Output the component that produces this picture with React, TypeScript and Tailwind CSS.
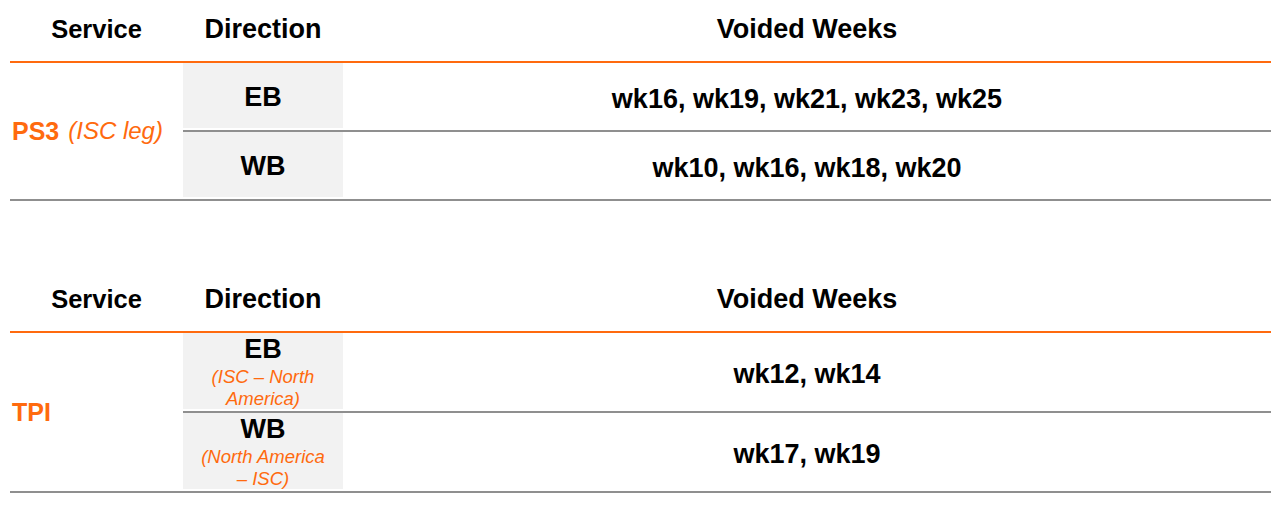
import React from "react";

const ORANGE = "text-[#ff6a0e]";

type Row = { dir: string; sub?: string[]; weeks: string };

function Table({
  service,
  note,
  rows,
  rowH,
  lastH,
}: {
  service: string;
  note?: string;
  rows: Row[];
  rowH: string;
  lastH: string;
}) {
  return (
    <div className="ml-[10px] w-[1261px]">
      <div className="flex h-[61px] items-center text-[27px] font-bold text-black leading-[30px] pb-[4px]">
        <div className="w-[173px] text-center text-[25.5px]">Service</div>
        <div className="w-[160px] text-center">Direction</div>
        <div className="flex-1 text-center">Voided Weeks</div>
      </div>
      <div className="h-[2px] bg-[#ff6a0e]" />
      <div className="flex border-b-2 border-[#8f8f8f]">
        <div className={`w-[173px] pl-[2px] flex items-center ${ORANGE} whitespace-nowrap`}>
          <span className="text-[25px] font-bold leading-[30px]">{service}</span>
          {note && <span className="ml-[9px] text-[24px] italic leading-[30px]">{note}</span>}
        </div>
        <div className="flex-1 flex flex-col">
          {rows.map((r, i) => {
            const last = i === rows.length - 1;
            return (
              <div
                key={i}
                className={`flex ${last ? lastH : rowH} ${last ? "" : "border-b-2 border-[#8f8f8f]"}`}
              >
                <div className="w-[160px] bg-[#f2f2f2] mb-[2px] flex flex-col items-center justify-center text-center pt-[2px]">
                  <div className="text-[27px] font-bold leading-[30px] text-black">{r.dir}</div>
                  {r.sub && (
                    <div className={`text-[18.5px] italic leading-[22px] mt-[2px] ${ORANGE} px-[6px]`}>
                      {r.sub.map((s, j) => (
                        <div key={j}>{s}</div>
                      ))}
                    </div>
                  )}
                </div>
                <div className="flex-1 flex items-center justify-center text-[27px] font-bold leading-[30px] text-black pt-[4px]">
                  {r.weeks}
                </div>
              </div>
            );
          })}
        </div>
      </div>
    </div>
  );
}

export default function App() {
  return (
    <div
      className="w-[1280px] h-[513px] bg-white overflow-hidden"
      style={{ fontFamily: '"Liberation Sans", Arial, sans-serif' }}
    >
      <Table
        service="PS3"
        note="(ISC leg)"
        rowH="h-[69px]"
        lastH="h-[67px]"
        rows={[
          { dir: "EB", weeks: "wk16, wk19, wk21, wk23, wk25" },
          { dir: "WB", weeks: "wk10, wk16, wk18, wk20" },
        ]}
      />
      <div className="h-[69px]" />
      <Table
        service="TPI"
        rowH="h-[80px]"
        lastH="h-[78px]"
        rows={[
          { dir: "EB", sub: ["(ISC – North", "America)"], weeks: "wk12, wk14" },
          { dir: "WB", sub: ["(North America", "– ISC)"], weeks: "wk17, wk19" },
        ]}
      />
    </div>
  );
}
